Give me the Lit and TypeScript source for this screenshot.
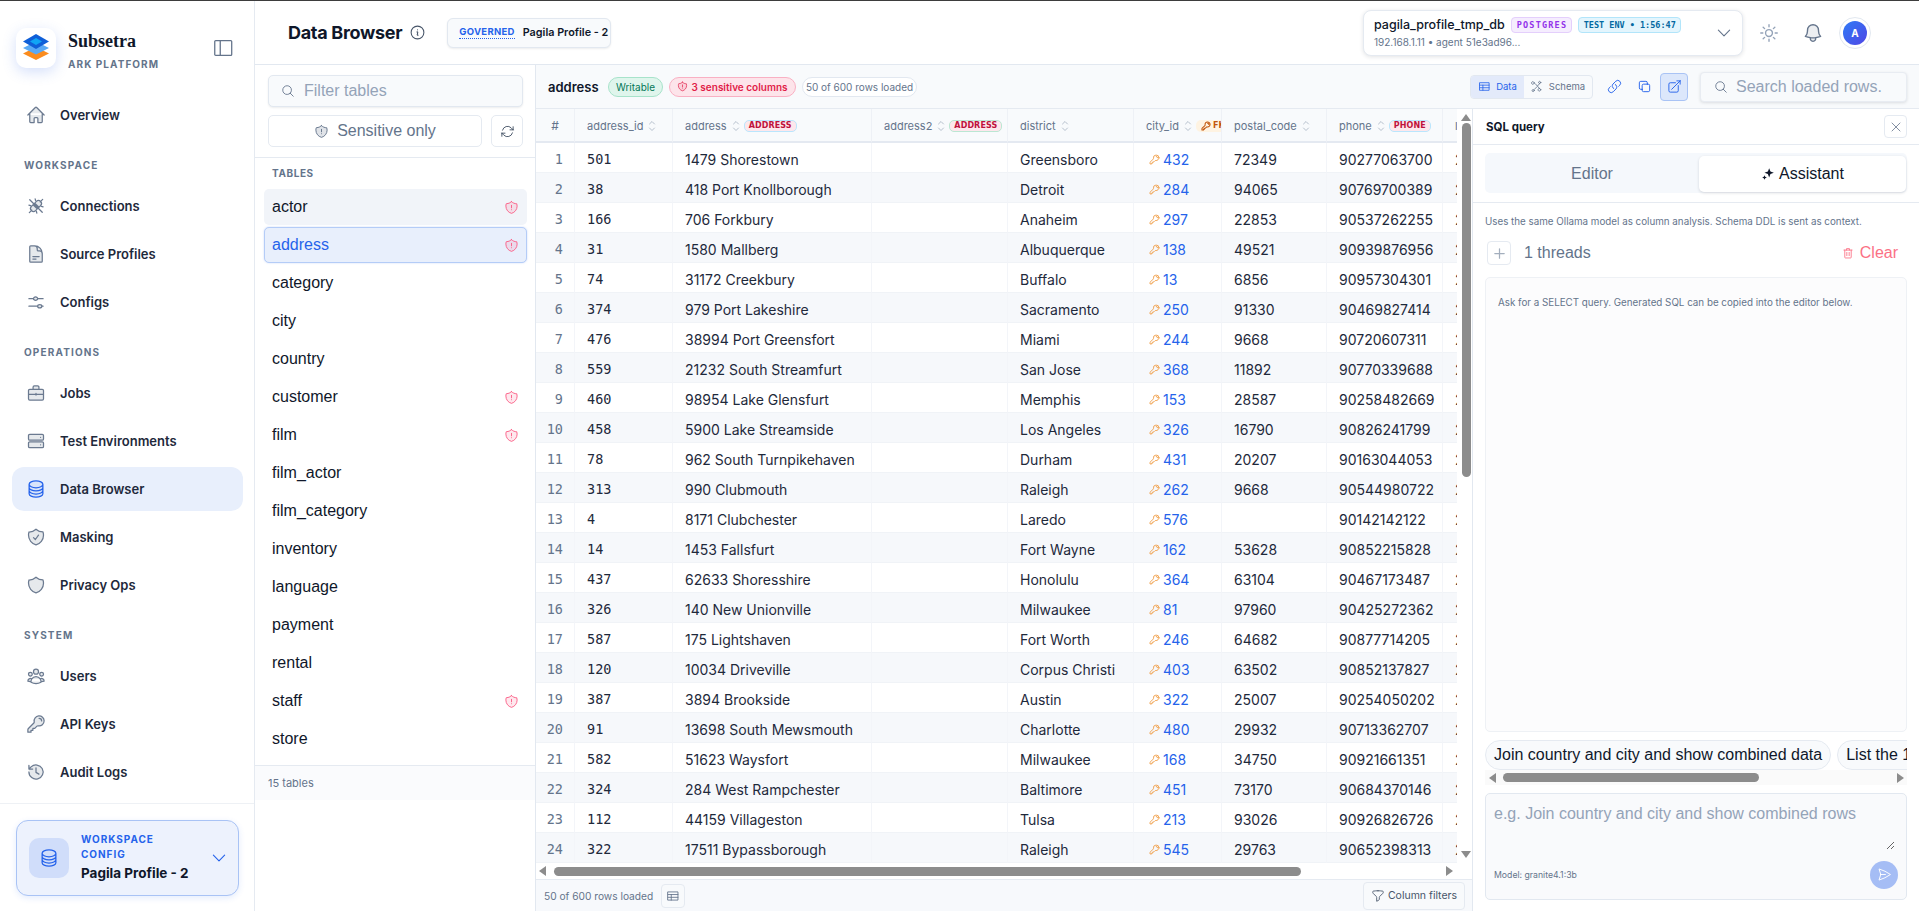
import { LitElement, html, css } from "lit";
import { customElement } from "lit/decorators.js";

const P = {
  home: "M2.25 12l8.954-8.955c.44-.439 1.152-.439 1.591 0L21.75 12M4.5 9.75v10.125c0 .621.504 1.125 1.125 1.125H9.75v-4.875c0-.621.504-1.125 1.125-1.125h2.25c.621 0 1.125.504 1.125 1.125V21h4.125c.621 0 1.125-.504 1.125-1.125V9.75",
  plug: "M4 20l3-3M20 4l-3 3M8.500 10.500l5 5-2 2a3.500 3.500 0 0 1-5-5zM15.500 13.500l-5-5 2-2a3.500 3.500 0 0 1 5 5zM4.500 4.500l15 15M11 3.500l.5 2M3.500 11l2 .5M13 20.500l-.5-2M20.500 13l-2-.5",
  doc: "M19.5 14.25v-2.625a3.375 3.375 0 00-3.375-3.375h-1.5A1.125 1.125 0 0113.5 7.125v-1.5a3.375 3.375 0 00-3.375-3.375H8.25m0 12.75h7.5m-7.5 3H12M10.5 2.25H5.625c-.621 0-1.125.504-1.125 1.125v17.25c0 .621.504 1.125 1.125 1.125h12.75c.621 0 1.125-.504 1.125-1.125V11.25a9 9 0 00-9-9z",
  sliders: "M3.5 8h5.5m5 0h6.5M9 8a2.5 2 0 1 0 5 0a2.5 2 0 1 0-5 0M3.5 17h10.5m5 0h1.5M14 17a2.5 2 0 1 0 5 0a2.5 2 0 1 0-5 0",
  case: "M4.5 7.5h15A1.5 1.5 0 0 1 21 9v10a1.5 1.5 0 0 1-1.5 1.5h-15A1.5 1.5 0 0 1 3 19V9a1.5 1.5 0 0 1 1.5-1.5zM8.5 7.5V5a1.5 1.5 0 0 1 1.5-1.5h4A1.5 1.5 0 0 1 15.5 5v2.500M3 13.500h18M12 12.500v2",
  server: "M4.5 4h15A1.500 1.500 0 0 1 21 5.500v4a1.500 1.500 0 0 1-1.500 1.500h-15A1.500 1.500 0 0 1 3 9.500v-4A1.500 1.500 0 0 1 4.500 4zM4.500 13h15a1.500 1.500 0 0 1 1.500 1.500v4a1.500 1.500 0 0 1-1.500 1.500h-15A1.500 1.500 0 0 1 3 18.500v-4A1.500 1.500 0 0 1 4.500 13zM17.500 7.500h.01M17.500 16.500h.01",
  db: "M20.25 6.375c0 2.278-3.694 4.125-8.25 4.125S3.75 8.653 3.75 6.375m16.5 0c0-2.278-3.694-4.125-8.25-4.125S3.75 4.097 3.75 6.375m16.5 0v11.25c0 2.278-3.694 4.125-8.25 4.125s-8.25-1.847-8.25-4.125V6.375m16.5 0v3.75m-16.5-3.75v3.75m16.5 0v3.75C20.25 16.153 16.556 18 12 18s-8.25-1.847-8.25-4.125v-3.75m16.5 0c0 2.278-3.694 4.125-8.25 4.125s-8.25-1.847-8.25-4.125",
  shieldCheck: "M9 12.75L11.25 15 15 9.750m-3-7.036A11.959 11.959 0 013.598 6 11.990 11.990 0 003 9.749c0 5.592 3.824 10.290 9 11.623 5.176-1.332 9-6.030 9-11.622 0-1.310-.210-2.571-.598-3.751h-.152c-3.196 0-6.100-1.248-8.250-3.285z",
  shield: "M12 2.714A11.959 11.959 0 013.598 6 11.990 11.990 0 003 9.749c0 5.592 3.824 10.290 9 11.623 5.176-1.332 9-6.030 9-11.622 0-1.310-.210-2.571-.598-3.751h-.152c-3.196 0-6.100-1.248-8.250-3.285z",
  shieldEx: "M12 8.500v4M12 15.500h.01M12 2.714A11.959 11.959 0 013.598 6 11.990 11.990 0 003 9.749c0 5.592 3.824 10.290 9 11.623 5.176-1.332 9-6.030 9-11.622 0-1.310-.210-2.571-.598-3.751h-.152c-3.196 0-6.100-1.248-8.250-3.285z",
  users: "M18 18.720a9.094 9.094 0 003.741-.479 3 3 0 00-4.682-2.720m.94 3.198l.001.031c0 .225-.012.447-.037.666A11.944 11.944 0 0112 21c-2.170 0-4.207-.576-5.963-1.584A6.062 6.062 0 016 18.719m12 0a5.971 5.971 0 00-.941-3.197m0 0A5.995 5.995 0 0012 12.750a5.995 5.995 0 00-5.058 2.772m0 0a3 3 0 00-4.681 2.720 8.986 8.986 0 003.740.477m.94-3.197a5.971 5.971 0 00-.94 3.197M15 6.750a3 3 0 11-6 0 3 3 0 016 0zm6 3a2.250 2.250 0 11-4.500 0 2.250 2.250 0 014.500 0zm-13.500 0a2.250 2.250 0 11-4.500 0 2.250 2.250 0 014.500 0z",
  key: "M15.750 5.250a3 3 0 013 3m3 0a6 6 0 01-7.029 5.912c-.563-.097-1.159.026-1.563.430L10.500 17.250H8.250v2.250H6v2.250H2.250v-2.818c0-.597.237-1.170.659-1.591l6.499-6.499c.404-.404.527-1 .430-1.563A6 6 0 1121.750 8.250z",
  hist: "M12 7v5.500l3.500 2M3.500 12a8.500 8.500 0 1 0 2.600-6.100L3.500 8.500M3.500 4v4.500H8",
  bell: "M14.857 17.082a23.848 23.848 0 005.454-1.310A8.967 8.967 0 0118 9.750V9A6 6 0 006 9v.750a8.967 8.967 0 01-2.312 6.022c1.733.640 3.560 1.085 5.455 1.310m5.714 0a24.255 24.255 0 01-5.714 0m5.714 0a3 3 0 11-5.714 0",
  sun: "M12 3v2.250m6.364.386l-1.591 1.591M21 12h-2.250m-.386 6.364l-1.591-1.591M12 18.750V21m-4.773-4.227l-1.591 1.591M5.250 12H3m4.227-4.773L5.636 5.636M15.750 12a3.750 3.750 0 11-7.500 0 3.750 3.750 0 017.500 0z",
  search: "M21 21l-5.197-5.197m0 0A7.500 7.500 0 105.196 5.196a7.500 7.500 0 0010.607 10.607z",
  chev: "M19.500 8.250l-7.500 7.500-7.500-7.500",
  x: "M6 18L18 6M6 6l12 12",
  plus: "M12 4.500v15m7.500-7.500h-15",
  trash: "M5 7h14M9.500 7V4.500h5V7M6.500 7v12.500a1 1 0 0 0 1 1h9a1 1 0 0 0 1-1V7M10 11v5.500M14 11v5.500",
  link: "M13.190 8.688a4.500 4.500 0 011.242 7.244l-4.500 4.500a4.500 4.500 0 01-6.364-6.364l1.757-1.757m13.350-.622l1.757-1.757a4.500 4.500 0 00-6.364-6.364l-4.500 4.500a4.500 4.500 0 001.242 7.244",
  copy: "M16.500 8.250V6a2.250 2.250 0 00-2.250-2.250H6A2.250 2.250 0 003.750 6v8.250A2.250 2.250 0 006 16.500h2.250m8.250-8.250H18a2.250 2.250 0 012.250 2.250V18A2.250 2.250 0 0118 20.250h-7.500A2.250 2.250 0 018.250 18v-1.500m8.250-8.250h-6a2.250 2.250 0 00-2.250 2.250v6",
  ext: "M13.500 6H5.250A2.250 2.250 0 003 8.250v10.500A2.250 2.250 0 005.250 21h10.500A2.250 2.250 0 0018 18.750V10.500m-10.500 6L21 3m0 0h-5.250M21 3v5.250",
  send: "M6 12L3.269 3.126A59.768 59.768 0 0121.485 12 59.770 59.770 0 013.270 20.876L5.999 12zm0 0h7.500",
  funnel: "M12 3c2.755 0 5.455.232 8.083.678.533.090.917.556.917 1.096v1.044a2.250 2.250 0 01-.659 1.591l-5.432 5.432a2.250 2.250 0 00-.659 1.591v2.927a2.250 2.250 0 01-1.244 2.013L9.750 21v-6.568a2.250 2.250 0 00-.659-1.591L3.659 7.409A2.250 2.250 0 013 5.818V4.774c0-.540.384-1.006.917-1.096A48.320 48.320 0 0112 3z",
  table: "M3.500 5h17v14h-17zM3.500 9.500h17M3.500 14.250h17M9 9.500V19",
  refresh: "M16.023 9.348h4.992M2.985 19.644v-4.992m0 0h4.992m-4.993 0l3.181 3.183a8.250 8.250 0 0013.803-3.700M4.031 9.865a8.250 8.250 0 0113.803-3.700l3.181 3.182m0-4.991v4.990",
  info: "M11.250 11.250l.041-.020a.750.750 0 011.063.852l-.708 2.836a.750.750 0 001.063.853l.041-.021M21 12a9 9 0 11-18 0 9 9 0 0118 0zm-9-3.750h.008v.008H12V8.250z",
  panel: "M4 4h16.500a1 1 0 0 1 1 1v14a1 1 0 0 1-1 1H4a1 1 0 0 1-1-1V5a1 1 0 0 1 1-1zM9 4v16",
  sort: "M8.250 15L12 18.750 15.750 15m-7.500-6L12 5.250 15.750 9",
  schema: "M6 5.500a2.500 2.500 0 1 0 0 .01zM18 4.500a2 2 0 1 0 0 .01zM18 18a2.500 2.500 0 1 0 0 .01zM6 19.500a2 2 0 1 0 0 .01zM8 7l8 9M16.500 6L12 11M6 17.500L10.500 13",
  star: "M14 2l2.200 5.800L22 10l-5.800 2.200L14 18l-2.200-5.800L6 10l5.800-2.200zM6 14l1.200 2.800L10 18l-2.800 1.200L6 22l-1.200-2.800L2 18l2.800-1.200z",
};
const ic = (d: string, cls = "") => html`<svg class="ic ${cls}" viewBox="0 0 24 24" aria-hidden="true"><path d=${d}></path></svg>`;

const NAV: [string, [string, string][]][] = [
  ["", [["Overview", P.home]]],
  ["WORKSPACE", [["Connections", P.plug], ["Source Profiles", P.doc], ["Configs", P.sliders]]],
  ["OPERATIONS", [["Jobs", P.case], ["Test Environments", P.server], ["Data Browser", P.db], ["Masking", P.shieldCheck], ["Privacy Ops", P.shield]]],
  ["SYSTEM", [["Users", P.users], ["API Keys", P.key], ["Audit Logs", P.hist]]],
];
const TABLES: [string, boolean][] = [["actor", true], ["address", true], ["category", false], ["city", false], ["country", false], ["customer", true], ["film", true], ["film_actor", false], ["film_category", false], ["inventory", false], ["language", false], ["payment", false], ["rental", false], ["staff", true], ["store", false]];
const ROWS = [
  ["501","1479 Shorestown","Greensboro","432","72349","90277063700"],
  ["38","418 Port Knollborough","Detroit","284","94065","90769700389"],
  ["166","706 Forkbury","Anaheim","297","22853","90537262255"],
  ["31","1580 Mallberg","Albuquerque","138","49521","90939876956"],
  ["74","31172 Creekbury","Buffalo","13","6856","90957304301"],
  ["374","979 Port Lakeshire","Sacramento","250","91330","90469827414"],
  ["476","38994 Port Greensfort","Miami","244","9668","90720607311"],
  ["559","21232 South Streamfurt","San Jose","368","11892","90770339688"],
  ["460","98954 Lake Glensfurt","Memphis","153","28587","90258482669"],
  ["458","5900 Lake Streamside","Los Angeles","326","16790","90826241799"],
  ["78","962 South Turnpikehaven","Durham","431","20207","90163044053"],
  ["313","990 Clubmouth","Raleigh","262","9668","90544980722"],
  ["4","8171 Clubchester","Laredo","576","","90142142122"],
  ["14","1453 Fallsfurt","Fort Wayne","162","53628","90852215828"],
  ["437","62633 Shoresshire","Honolulu","364","63104","90467173487"],
  ["326","140 New Unionville","Milwaukee","81","97960","90425272362"],
  ["587","175 Lightshaven","Fort Worth","246","64682","90877714205"],
  ["120","10034 Driveville","Corpus Christi","403","63502","90852137827"],
  ["387","3894 Brookside","Austin","322","25007","90254050202"],
  ["91","13698 South Mewsmouth","Charlotte","480","29932","90713362707"],
  ["582","51623 Waysfort","Milwaukee","168","34750","90921661351"],
  ["324","284 West Rampchester","Baltimore","451","73170","90684370146"],
  ["112","44159 Villageston","Tulsa","213","93026","90926826726"],
  ["322","17511 Bypassborough","Raleigh","545","29763","90652398313"],
];
const WIDTHS = [39, 98, 199, 136, 126, 88, 105, 116, 200];

@customElement("app-root")
export class AppRoot extends LitElement {
  static styles = css`
    :host { display: block; font-family: Inter, "Noto Sans", sans-serif; color: #0f172a; background: #fff; }
    * { box-sizing: border-box; }
    .ic { width: 20px; height: 20px; fill: none; stroke: currentColor; stroke-width: 1.5; stroke-linecap: round; stroke-linejoin: round; flex: none; display: block; }
    .page { width: 1919px; height: 911px; display: flex; flex-direction: column; overflow: hidden; }
    .topline { height: 1px; background: #3d3d3d; flex: none; }
    .app { flex: 1; display: flex; min-height: 0; }

    .side { width: 255px; flex: none; border-right: 1px solid #e5eaf1; display: flex; flex-direction: column; }
    .brand { height: 92px; flex: none; display: flex; padding: 27px 20px 0 16px; }
    .logo { width: 40px; height: 40px; border-radius: 10px; background: #fff; box-shadow: 0 4px 14px rgba(59,108,230,.22); display: flex; align-items: center; justify-content: center; flex: none; }
    .logo svg { width: 30px; height: 32px; display: block; }
    .bname { margin-left: 12px; }
    .bname b { display: block; font: bold 18px/20px "Liberation Serif", serif; margin-top: 3px; }
    .bname span { display: block; font-size: 10px; font-weight: 700; letter-spacing: 1.05px; color: #64748b; margin-top: 7px; line-height: 12px; }
    .collapse { margin: 9px 0 0 auto; width: 22px; height: 22px; color: #64748b; }
    .collapse .ic { width: 22px; height: 22px; stroke-width: 1.4; }
    nav { flex: 1; padding: 0 11px 0 12px; }
    .navlabel { font-size: 10px; font-weight: 700; letter-spacing: 1.15px; color: #64748b; line-height: 14px; padding-left: 12px; margin: 21px 0 12px; }
    .navitem { height: 44px; margin-bottom: 4px; border-radius: 12px; display: flex; align-items: center; gap: 14px; padding-left: 14px; font-size: 13px; font-weight: 600; color: #1e293b; }
    .navitem .ic { color: #6b7a90; }
    .navitem .ic path { fill: rgba(100,116,139,.16); }
    .navitem.on { background: #e8effc; }
    .navitem.on .ic { color: #2563eb; }
    .navitem.on .ic path { fill: rgba(37,99,235,.08); }
    .cardwrap { flex: none; border-top: 1px solid #eef1f5; padding: 16px 15px 15px 16px; }
    .card { height: 76px; border: 1.5px solid #a9c3f5; border-radius: 12px; background: #edf2fd; box-shadow: 0 2px 6px rgba(37,99,235,.12); display: flex; align-items: center; padding: 0 10px 2px 12px; }
    .cardicon { width: 40px; height: 40px; border-radius: 10px; background: #d0ddfa; display: flex; align-items: center; justify-content: center; color: #2563eb; flex: none; margin-top: 2px; }
    .cardtext { margin-left: 12px; flex: 1; }
    .cardtext small { display: block; font-size: 10px; font-weight: 700; letter-spacing: .95px; color: #2563eb; line-height: 15px; width: 90px; }
    .cardtext b { display: block; font-size: 13.5px; font-weight: 700; line-height: 20px; margin-top: 1px; white-space: nowrap; }
    .card > .ic { width: 18px; height: 18px; color: #2563eb; margin-top: 2px; }

    .main { flex: 1; min-width: 0; display: flex; flex-direction: column; }
    .top { height: 64px; flex: none; border-bottom: 1px solid #e2e8f0; display: flex; align-items: center; padding-left: 33px; }
    .top h1 { font-size: 18px; font-weight: 700; margin: 0; line-height: 24px; letter-spacing: -.3px; }
    .infoic { width: 17px; height: 17px; color: #475569; margin-left: 7px; }
    .gov { margin-left: 21px; height: 30px; width: 164px; border: 1px solid #e2e8f0; border-radius: 6px; background: #f8fafc; box-shadow: 0 1px 2px rgba(15,23,42,.08); display: flex; align-items: center; padding-left: 11px; white-space: nowrap; }
    .gov em { font-style: normal; font-size: 9.500px; font-weight: 700; letter-spacing: .3px; color: #2563eb; border-bottom: 1px dotted #2563eb; line-height: 12px; }
    .gov span { font-size: 10.800px; font-weight: 600; margin-left: 8px; }
    .conn { margin-left: auto; width: 380px; height: 46px; border: 1px solid #e5eaf1; border-radius: 8px; background: #fff; box-shadow: 0 1px 4px rgba(15,23,42,.12); display: flex; align-items: center; padding: 0 9px 0 10px; }
    .conntext { flex: 1; min-width: 0; }
    .connl1 { display: flex; align-items: center; height: 16px; }
    .connl1 b { font-size: 12.500px; font-weight: 500; }
    .bdg { font-family: "DejaVu Sans Mono", monospace; font-size: 8.500px; font-weight: 700; height: 16px; line-height: 14px; border-radius: 4px; padding: 0 5px; white-space: nowrap; border: 1px solid; }
    .bdg.pg { color: #9333ea; background: #f5edfe; border-color: #e4cffc; margin-left: 6px; width: 61px; letter-spacing: 1.2px; }
    .bdg.env { color: #0369a1; background: #e3f5fd; border-color: #b2e5fa; margin-left: 6px; width: 103px; letter-spacing: 0; }
    .connl2 { font-size: 10px; color: #64748b; margin-top: 3px; line-height: 13px; }
    .conn > .ic { width: 18px; height: 18px; color: #64748b; }
    .sunic { width: 22px; height: 22px; color: #94a3b8; margin-left: 15px; }
    .bellic { width: 22px; height: 22px; color: #64748b; margin-left: 22px; }
    .bellic path { fill: rgba(100,116,139,.12); }
    .avatar { width: 32px; height: 32px; border-radius: 50%; border: 1px solid #e2e8f0; padding: 3px; margin: 0 48px 0 15px; flex: none; }
    .avatar span { display: flex; width: 100%; height: 100%; border-radius: 50%; background: linear-gradient(135deg,#2f7bf6,#4f46e5); color: #fff; font-size: 10px; font-weight: 700; align-items: center; justify-content: center; }
    .body { flex: 1; min-height: 0; display: flex; }

    .list { width: 281px; flex: none; border-right: 1px solid #e2e8f0; display: flex; flex-direction: column; }
    .filters { padding: 10px 12px 10px 13px; border-bottom: 1px solid #e5eaf1; flex: none; }
    .filter { height: 32px; border: 1px solid #e2e8f0; border-radius: 5px; background: #f8fafc; box-shadow: 0 1px 2px rgba(15,23,42,.08); display: flex; align-items: center; padding-left: 12px; color: #64748b; }
    .filter .ic { width: 14px; height: 14px; }
    .filter input, .search input { flex: 1; min-width: 0; border: 0; outline: 0; background: transparent; font: 16px "Liberation Sans", Arial, sans-serif; padding: 0; margin-left: 9px; }
    .search input { margin-left: 8px; }
    input::placeholder, textarea::placeholder { color: #94a3b8; opacity: 1; }
    .filterrow { display: flex; gap: 9px; margin-top: 8px; }
    .sens, .refresh { height: 32px; border: 1px solid #e5eaf1; border-radius: 5px; background: #fff; display: flex; align-items: center; justify-content: center; color: #64748b; }
    .sens { flex: 1; gap: 8px; font: 16px "Liberation Sans", Arial, sans-serif; }
    .sens .ic { width: 15px; height: 15px; }
    .sens .ic path { fill: rgba(100,116,139,.2); }
    .refresh { width: 32px; flex: none; color: #475569; }
    .refresh .ic { width: 15px; height: 15px; }
    .tlabel { font-size: 10px; font-weight: 700; letter-spacing: .6px; color: #64748b; line-height: 14px; margin: 8px 0 9px 17px; flex: none; }
    .titems { padding: 0 8px 8px 9px; border-bottom: 1px solid #e5eaf1; flex: none; display: flex; flex-direction: column; gap: 2px; }
    .titem { height: 36px; border-radius: 5px; display: flex; align-items: center; justify-content: space-between; padding: 0 7px 0 7px; font: 16px "Liberation Sans", Arial, sans-serif; border: 1px solid transparent; }
    .titem .ic { width: 15px; height: 15px; color: #fb5f86; }
    .titem .ic path { fill: rgba(251,95,134,.14); }
    .titem.hov { background: #f1f4f9; }
    .titem.on { background: #e8effc; border-color: #b4ccf7; color: #2563eb; box-shadow: 0 0 2px rgba(37,99,235,.25); }
    .tfoot { height: 34px; flex: none; background: #fafbfd; font-size: 11px; color: #64748b; display: flex; align-items: center; padding-left: 13px; }

    .work { flex: 1; min-width: 0; display: flex; flex-direction: column; }
    .bar { height: 44px; flex: none; background: #f8fafc; border-bottom: 1px solid #e5eaf1; display: flex; align-items: center; padding: 0 12px 0 12px; }
    .bar h2 { font-size: 13px; font-weight: 600; margin: 0 0 0 0; width: 60px; }
    .pill { height: 20px; border-radius: 10px; border: 1px solid; font-size: 10px; display: flex; align-items: center; white-space: nowrap; justify-content: center; }
    .pill.w { width: 55px; color: #047857; background: #dff5ec; border-color: #a7e3ca; }
    .pill.s { width: 127px; margin-left: 6px; color: #e11d48; background: #fde4ea; border-color: #f9b0c3; font-weight: 600; gap: 3px; }
    .pill.s .ic { width: 11px; height: 11px; }
    .pill.s .ic path { fill: rgba(225,29,72,.1); }
    .pill.r { width: 115px; margin-left: 6px; color: #64748b; background: #fff; border-color: #e2e8f0; }
    .seg { margin-left: auto; width: 123px; height: 24px; border: 1px solid #e2e8f0; border-radius: 4px; display: flex; font-size: 9.500px; overflow: hidden; background: #f8fafc; }
    .seg span { display: flex; align-items: center; justify-content: center; gap: 5px; color: #64748b; }
    .seg .ic { width: 13px; height: 13px; }
    .seg .d { width: 53px; background: #e3eafa; color: #2563eb; }
    .seg .m { flex: 1; }
    .tool { width: 30px; height: 30px; display: flex; align-items: center; justify-content: center; color: #2563eb; flex: none; }
    .tool .ic { width: 15px; height: 15px; }
    .tool.l { margin-left: 6px; }
    .tool.on { width: 28px; height: 28px; margin-left: 1px; border: 1px solid #a9c3f5; background: #dce7fb; border-radius: 4px; }
    .search { width: 207px; height: 30px; margin-left: 12px; border: 1px solid #e8ecf2; border-radius: 4px; background: #f8fafc; box-shadow: 0 1px 3px rgba(15,23,42,.12); display: flex; align-items: center; padding-left: 13px; color: #64748b; }
    .search .ic { width: 14px; height: 14px; }
    .split { flex: 1; min-height: 0; display: flex; }

    .tablepane { width: 936px; flex: none; display: flex; flex-direction: column; }
    .tableup { flex: 1; min-height: 0; display: flex; }
    .scroller { flex: 1; min-width: 0; overflow: hidden; }
    table { border-collapse: separate; border-spacing: 0; table-layout: fixed; width: 1107px; }
    th { height: 34px; background: #f8fafc; border-bottom: 2px solid #e4e9f1; border-right: 1px solid #eef1f6; padding: 1px 0 0 12px; text-align: left; font-size: 11px; font-weight: 400; color: #64748b; white-space: nowrap; overflow: hidden; }
    .hc { display: flex; align-items: center; }
    .hc .ic { width: 16px; height: 16px; color: #b6c0cd; margin-left: 1px; }
    .tag { font-family: "DejaVu Sans", sans-serif; font-size: 8px; font-weight: 700; letter-spacing: .1px; color: #be123c; background: #fde7ec; border: 1px solid #bae6fd; border-radius: 5px; height: 12px; line-height: 10px; padding: 0 4px; flex: none; }
    .tag.g { border-color: #bbe7d3; }
    .tag.fk { color: #c2570c; background: #fef3e2; border-color: transparent; display: flex; align-items: center; gap: 2px; padding: 0 4px; }
    .hc .tag.fk .ic { width: 10px; height: 10px; stroke-width: 2.5; margin-left: 0; color: #c2570c; }
    td { height: 30px; padding: 3px 0 0 12px; border-bottom: 1px solid #f0f3f7; border-right: 1px solid #f3f5f9; font-size: 14px; color: #1e293b; white-space: nowrap; overflow: hidden; }
    tr.alt td { background: #f6f8fb; }
    td.n { font-family: "DejaVu Sans Mono", monospace; font-size: 13.500px; color: #64748b; text-align: right; padding: 3px 11px 0 0; }
    td.m { font-family: "DejaVu Sans Mono", monospace; font-size: 13.500px; }
    th.n { padding: 0; text-align: center; font-size: 12px; }
    .fkv { display: flex; align-items: center; color: #2563eb; gap: 3px; padding-left: 3px; }
    .fkv .ic { width: 11px; height: 11px; stroke-width: 2; color: #f0a04b; }
    .vbar { width: 15px; flex: none; display: flex; flex-direction: column; align-items: center; padding: 5px 0 0 3px; }
    .up { width: 0; height: 0; border: 5px solid transparent; border-top: 0; border-bottom: 7px solid #8c8c8c; flex: none; }
    .down { width: 0; height: 0; border: 5px solid transparent; border-bottom: 0; border-top: 7px solid #8c8c8c; margin-bottom: 5px; flex: none; }
    .vthumb { width: 9px; border-radius: 5px; background: #8c8c8c; height: 354px; margin-top: 2px; flex: none; }
    .vfill { flex: 1; }
    .hbar { height: 17px; flex: none; display: flex; align-items: center; padding: 0 19px 0 3px; border-bottom: 1px solid #e5eaf1; }
    .left { width: 0; height: 0; border: 5px solid transparent; border-left: 0; border-right: 7px solid #8c8c8c; flex: none; }
    .right { width: 0; height: 0; border: 5px solid transparent; border-right: 0; border-left: 7px solid #8c8c8c; flex: none; }
    .hthumb { height: 9px; border-radius: 5px; background: #8c8c8c; flex: none; }
    .hfill { flex: 1; }
    .t1 { width: 747px; margin-left: 8px; }
    .foot { height: 31px; flex: none; background: #f7f9fc; display: flex; align-items: center; padding: 0 7px 0 8px; font-size: 10.200px; color: #64748b; }
    .fbtn { border: 1px solid #e5eaf1; border-radius: 4px; background: #f8fafc; display: flex; align-items: center; justify-content: center; color: #64748b; }
    .fbtn .ic { width: 14px; height: 14px; }
    .fbtn.i { width: 24px; height: 24px; margin-left: 8px; }
    .fbtn.c { margin-left: auto; width: 102px; height: 28px; gap: 3px; font-size: 10.500px; color: #475569; }

    .sql { flex: 1; min-width: 0; border-left: 1px solid #e2e8f0; display: flex; flex-direction: column; }
    .sqlh { height: 36px; flex: none; border-bottom: 1px solid #e5eaf1; display: flex; align-items: center; justify-content: space-between; padding: 0 12px 0 13px; }
    .sqlh b { font-size: 11.500px; font-weight: 700; }
    .close { width: 23px; height: 23px; border: 1px solid #e5eaf1; border-radius: 4px; display: flex; align-items: center; justify-content: center; color: #64748b; }
    .close .ic { width: 16px; height: 16px; stroke-width: 1.2; }
    .tabs { height: 58px; flex: none; border-bottom: 1px solid #e5eaf1; padding: 8px 12px; }
    .tabbox { height: 40px; background: #f5f8fc; border-radius: 5px; display: flex; padding: 3px 1px 1px 0; font: 16px "Liberation Sans", Arial, sans-serif; }
    .tabbox span { flex: 1; display: flex; align-items: center; justify-content: center; color: #64748b; gap: 4px; }
    .tabbox span.on { flex: none; width: 207px; background: #fff; border-radius: 5px; box-shadow: 0 1px 3px rgba(15,23,42,.15); color: #0f172a; }
    .tabbox .ic { width: 14px; height: 14px; fill: #0f172a; stroke: none; }
    .sqlb { flex: 1; min-height: 0; display: flex; flex-direction: column; padding: 12px 12px 11px; }
    .desc { font-size: 9.800px; line-height: 14px; color: #64748b; flex: none; white-space: nowrap; }
    .threads { height: 24px; margin-top: 12px; display: flex; align-items: center; flex: none; font: 16px "Liberation Sans", Arial, sans-serif; color: #64748b; }
    .addb { width: 24px; height: 24px; border: 1px solid #e5eaf1; border-radius: 4px; display: flex; align-items: center; justify-content: center; color: #a3aebd; margin: 0 13px 0 2px; }
    .addb .ic { width: 15px; height: 15px; stroke-width: 2; }
    .clear { margin-left: auto; margin-right: 9px; display: flex; align-items: center; gap: 5px; color: #fb7185; }
    .clear .ic { width: 14px; height: 14px; }
    .chat { flex: 1; min-height: 0; margin-top: 12px; border: 1px solid #eef1f5; border-radius: 5px; background: #fcfcfd; padding: 18px 12px; font-size: 9.800px; line-height: 14px; color: #64748b; white-space: nowrap; }
    .chips { margin-top: 8px; height: 30px; flex: none; display: flex; gap: 6px; overflow: hidden; }
    .chip { height: 30px; border: 1px solid #e5eaf1; border-radius: 15px; background: #f8fafc; padding: 0 8px; font: 16px/28px "Liberation Sans", Arial, sans-serif; white-space: nowrap; flex: none; }
    .sbar { height: 15px; flex: none; background: #fafafa; display: flex; align-items: center; padding: 0 3px 0 4px; }
    .t2 { width: 256px; margin-left: 7px; }
    .ask { margin-top: 8px; height: 107px; flex: none; border: 1px solid #e2e8f0; border-radius: 5px; background: #f9fafc; display: flex; flex-direction: column; }
    textarea { height: 56px; width: calc(100% - 11px); flex: none; border: 0; outline: 0; background: transparent; font: 16px/20px "Liberation Sans", Arial, sans-serif; padding: 10px 8px 0; margin: 0; display: block; }
    .askf { flex: 1; display: flex; align-items: center; justify-content: space-between; padding: 0 8px 0 8px; font-size: 8.700px; color: #64748b; }
    .sendb { width: 28px; height: 28px; border-radius: 50%; background: #a5bdf5; color: #fff; display: flex; align-items: center; justify-content: center; }
    .sendb .ic { width: 15px; height: 15px; }
  `;

  private header() {
    const sort = ic(P.sort);
    return html`<tr>
      <th class="n">#</th>
      <th><div class="hc">address_id${sort}</div></th>
      <th><div class="hc">address${sort}<span class="tag">ADDRESS</span></div></th>
      <th><div class="hc">address2${sort}<span class="tag g">ADDRESS</span></div></th>
      <th><div class="hc">district${sort}</div></th>
      <th><div class="hc">city_id${sort}<span class="tag fk">${ic(P.key)}FK</span></div></th>
      <th><div class="hc">postal_code${sort}</div></th>
      <th><div class="hc">phone${sort}<span class="tag">PHONE</span></div></th>
      <th>l</th>
    </tr>`;
  }

  render() {
    return html`<div class="page">
      <div class="topline"></div>
      <div class="app">
        <aside class="side">
          <div class="brand">
            <div class="logo"><svg viewBox="0 0 30 32">
              <path d="M15 15L28 21.500 15 28 2 21.500z" fill="#fb8c1e"></path>
              <path d="M15 9.500L28 16 15 22.500 2 16z" fill="#5aa9f5"></path>
              <path d="M15 2L28 9.500 15 17 2 9.500z" fill="#0f5fd8"></path>
              <path d="M15 6L21 9.500 15 13 9 9.500z" fill="#10a5f5"></path>
            </svg></div>
            <div class="bname"><b>Subsetra</b><span>ARK PLATFORM</span></div>
            <div class="collapse">${ic(P.panel)}</div>
          </div>
          <nav>
            ${NAV.map(([label, items]) => html`
              ${label ? html`<div class="navlabel">${label}</div>` : ""}
              ${items.map(([t, d]) => html`<div class="navitem ${t === "Data Browser" ? "on" : ""}">${ic(d)}<span>${t}</span></div>`)}
            `)}
          </nav>
          <div class="cardwrap"><div class="card">
            <div class="cardicon">${ic(P.db)}</div>
            <div class="cardtext"><small>WORKSPACE CONFIG</small><b>Pagila Profile - 2</b></div>
            ${ic(P.chev)}
          </div></div>
        </aside>
        <div class="main">
          <header class="top">
            <h1>Data Browser</h1>
            ${ic(P.info, "infoic")}
            <div class="gov"><em>GOVERNED</em><span>Pagila Profile - 2</span></div>
            <div class="conn">
              <div class="conntext">
                <div class="connl1"><b>pagila_profile_tmp_db</b><span class="bdg pg">POSTGRES</span><span class="bdg env">TEST ENV • 1:56:47</span></div>
                <div class="connl2">192.168.1.11 • agent 51e3ad96...</div>
              </div>
              ${ic(P.chev)}
            </div>
            ${ic(P.sun, "sunic")}
            ${ic(P.bell, "bellic")}
            <div class="avatar"><span>A</span></div>
          </header>
          <div class="body">
            <section class="list">
              <div class="filters">
                <div class="filter">${ic(P.search)}<input placeholder="Filter tables" /></div>
                <div class="filterrow">
                  <div class="sens">${ic(P.shieldEx)}<span>Sensitive only</span></div>
                  <div class="refresh">${ic(P.refresh)}</div>
                </div>
              </div>
              <div class="tlabel">TABLES</div>
              <div class="titems">
                ${TABLES.map(([t, s]) => html`<div class="titem ${t === "actor" ? "hov" : ""} ${t === "address" ? "on" : ""}"><span>${t}</span>${s ? ic(P.shieldEx) : ""}</div>`)}
              </div>
              <div class="tfoot">15 tables</div>
            </section>
            <section class="work">
              <div class="bar">
                <h2>address</h2>
                <span class="pill w">Writable</span>
                <span class="pill s">${ic(P.shieldEx)}3 sensitive columns</span>
                <span class="pill r">50 of 600 rows loaded</span>
                <div class="seg"><span class="d">${ic(P.table)}Data</span><span class="m">${ic(P.schema)}Schema</span></div>
                <div class="tool l">${ic(P.link)}</div>
                <div class="tool">${ic(P.copy)}</div>
                <div class="tool on">${ic(P.ext)}</div>
                <div class="search">${ic(P.search)}<input placeholder="Search loaded rows." /></div>
              </div>
              <div class="split">
                <div class="tablepane">
                  <div class="tableup">
                    <div class="scroller">
                      <table>
                        <colgroup>${WIDTHS.map((w) => html`<col style="width:${w}px" />`)}</colgroup>
                        <thead>${this.header()}</thead>
                        <tbody>
                          ${ROWS.map((r, i) => html`<tr class=${i % 2 ? "alt" : ""}>
                            <td class="n">${i + 1}</td>
                            <td class="m">${r[0]}</td>
                            <td>${r[1]}</td>
                            <td></td>
                            <td>${r[2]}</td>
                            <td><div class="fkv">${ic(P.key)}${r[3]}</div></td>
                            <td>${r[4]}</td>
                            <td>${r[5]}</td>
                            <td>2</td>
                          </tr>`)}
                        </tbody>
                      </table>
                    </div>
                    <div class="vbar"><div class="up"></div><div class="vthumb"></div><div class="vfill"></div><div class="down"></div></div>
                  </div>
                  <div class="hbar"><div class="left"></div><div class="hthumb t1"></div><div class="hfill"></div><div class="right"></div></div>
                  <div class="foot">
                    <span>50 of 600 rows loaded</span>
                    <div class="fbtn i">${ic(P.table)}</div>
                    <div class="fbtn c">${ic(P.funnel)}Column filters</div>
                  </div>
                </div>
                <aside class="sql">
                  <div class="sqlh"><b>SQL query</b><div class="close">${ic(P.x)}</div></div>
                  <div class="tabs"><div class="tabbox"><span>Editor</span><span class="on">${ic(P.star)}Assistant</span></div></div>
                  <div class="sqlb">
                    <div class="desc">Uses the same Ollama model as column analysis. Schema DDL is sent as context.</div>
                    <div class="threads">
                      <div class="addb">${ic(P.plus)}</div><span>1 threads</span>
                      <div class="clear">${ic(P.trash)}Clear</div>
                    </div>
                    <div class="chat">Ask for a SELECT query. Generated SQL can be copied into the editor below.</div>
                    <div class="chips"><span class="chip">Join country and city and show combined data</span><span class="chip">List the 10 most recent rows</span></div>
                    <div class="sbar"><div class="left"></div><div class="hthumb t2"></div><div class="hfill"></div><div class="right"></div></div>
                    <div class="ask">
                      <textarea placeholder="e.g. Join country and city and show combined rows"></textarea>
                      <div class="askf"><span>Model: granite4.1:3b</span><div class="sendb">${ic(P.send)}</div></div>
                    </div>
                  </div>
                </aside>
              </div>
            </section>
          </div>
        </div>
      </div>
    </div>`;
  }
}
